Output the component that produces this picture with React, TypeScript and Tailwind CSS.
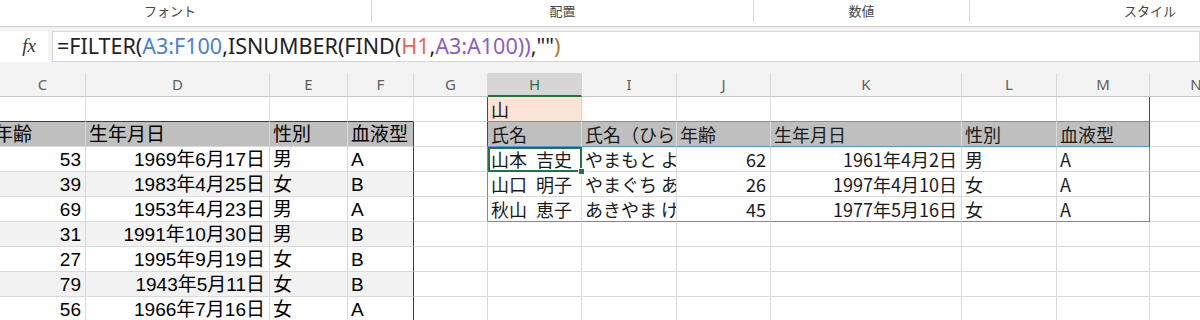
import type { ReactNode } from "react";

const GRID = "grid grid-cols-[86px_184px_78px_66px_74px_94px_95px_94px_191px_95px_93px_93px]";
const LEFT_FONT = "font-['Liberation_Sans','Noto_Sans_CJK_JP',sans-serif] text-[19px] text-black";
const RIGHT_FONT = "font-['Noto_Sans_CJK_JP',sans-serif] text-[18px] text-[#1a1a1a]";

const COLUMNS = ["C", "D", "E", "F", "G", "H", "I", "J", "K", "L", "M", "N"];

const LEFT_ROWS = [
  ["53", "1969年6月17日", "男", "A"],
  ["39", "1983年4月25日", "女", "B"],
  ["69", "1953年4月23日", "男", "A"],
  ["31", "1991年10月30日", "男", "B"],
  ["27", "1995年9月19日", "女", "B"],
  ["79", "1943年5月11日", "女", "B"],
  ["56", "1966年7月16日", "女", "A"],
];

const RIGHT_ROWS = [
  ["山本 吉史", "やまもと よしふみ", "62", "1961年4月2日", "男", "A"],
  ["山口 明子", "やまぐち あきこ", "26", "1997年4月10日", "女", "A"],
  ["秋山 恵子", "あきやま けいこ", "45", "1977年5月16日", "女", "A"],
];

const HEADERS_LEFT = ["年齢", "生年月日", "性別", "血液型"];
const HEADERS_RIGHT = ["氏名", "氏名（ひらがな）", "年齢", "生年月日", "性別", "血液型"];

const LINE = "border-r-[#dadada]";
const LINE_B = "border-b-[#dadada]";
const DARK_R = "border-r-[#3c3c3c]";
const DARK_B = "border-b-[#3c3c3c]";
const BLUE_R = "border-r-[#5b8fdc]";
const BLUE_B = "border-b-[#5b8fdc]";

interface CellProps {
  children?: ReactNode;
  right?: boolean;
  bg?: string;
  rc?: string;
  bc?: string;
  font?: string;
  selected?: boolean;
}

function Cell({ children, right, bg = "bg-white", rc = LINE, bc = LINE_B, font = "", selected }: CellProps) {
  return (
    <div
      className={`flex h-[25px] items-center whitespace-nowrap border-r border-b leading-none ${
        right ? "justify-end pr-[4px] pl-[3px]" : "px-[3px]"
      } ${selected ? "relative outline-2 -outline-offset-2 outline-[#217346]" : "overflow-hidden"} ${bg} ${rc} ${bc} ${font}`}
    >
      {children}
      {selected && (
        <span className="absolute -right-[4px] -bottom-[4px] z-10 h-[7px] w-[7px] border border-white bg-[#217346]" />
      )}
    </div>
  );
}

function SheetRow({ r }: { r: number }) {
  const left = r >= 3 ? LEFT_ROWS[r - 3] : null;
  const right = r >= 3 && r <= 5 ? RIGHT_ROWS[r - 3] : null;
  const stripe = r >= 3 && r % 2 === 0 ? "bg-[#f2f2f2]" : "bg-white";
  const cells: ReactNode[] = [];

  // left table, C..F
  for (let c = 0; c < 4; c++) {
    const rc = c === 3 && r >= 2 ? DARK_R : LINE;
    if (r === 1) {
      cells.push(<Cell key={c} bc={DARK_B} rc={rc} />);
    } else if (r === 2) {
      cells.push(
        <Cell key={c} bg="bg-[#bfbfbf]" rc={rc} font={LEFT_FONT}>
          {c === 0 ? <span className="-ml-[9px]">{HEADERS_LEFT[c]}</span> : HEADERS_LEFT[c]}
        </Cell>,
      );
    } else {
      cells.push(
        <Cell key={c} bg={stripe} rc={rc} right={c < 2} font={LEFT_FONT}>
          {left?.[c]}
        </Cell>,
      );
    }
  }

  // G
  cells.push(<Cell key="g" rc={r <= 2 ? "border-r-[#4a4a4a]" : r <= 5 ? BLUE_R : LINE} />);

  // right table, H..M
  for (let c = 0; c < 6; c++) {
    const rc = c === 5 ? (r <= 2 ? "border-r-[#4a4a4a]" : r <= 5 ? BLUE_R : LINE) : LINE;
    if (r === 1) {
      cells.push(
        <Cell key={`h${c}`} bg={c === 0 ? "bg-[#fce4d6]" : "bg-white"} rc={rc} bc="border-b-[#8c8c8c]" font={RIGHT_FONT}>
          {c === 0 ? "山" : null}
        </Cell>,
      );
    } else if (r === 2) {
      cells.push(
        <Cell key={`h${c}`} bg="bg-[#bfbfbf]" rc={rc} bc={BLUE_B} font={RIGHT_FONT}>
          {HEADERS_RIGHT[c]}
        </Cell>,
      );
    } else {
      cells.push(
        <Cell
          key={`h${c}`}
          rc={rc}
          bc={r === 5 ? BLUE_B : LINE_B}
          right={c === 2 || c === 3}
          font={RIGHT_FONT}
          selected={r === 3 && c === 0}
        >
          {c === 0 && right ? <span className="[word-spacing:5px]">{right[c]}</span> : right?.[c]}
        </Cell>,
      );
    }
  }

  // N
  cells.push(<Cell key="n" />);

  return <div className={GRID}>{cells}</div>;
}

function Ribbon() {
  return (
    <div className="flex h-[27px] border-b border-[#cdcdcd] bg-white font-['Noto_Sans_CJK_JP',sans-serif] text-[13px] text-[#474747]">
      <div className="flex h-[22px] w-[371px] items-center justify-center pr-[31px]">フォント</div>
      <div className="h-[22px] w-px bg-[#d4d4d4]" />
      <div className="flex h-[22px] w-[381px] items-center justify-center">配置</div>
      <div className="h-[22px] w-px bg-[#d4d4d4]" />
      <div className="flex h-[22px] w-[215px] items-center justify-center">数値</div>
      <div className="h-[22px] w-px bg-[#d4d4d4]" />
      <div className="flex h-[22px] flex-1 items-center justify-end pr-[24px]">スタイル</div>
    </div>
  );
}

function FormulaBar() {
  return (
    <div className="flex h-[36px] bg-[#f3f3f3] pt-[4px]">
      <div className="flex h-[31px] w-[48px] items-center justify-end bg-white pr-[12px] font-['Liberation_Serif',serif] text-[19px] italic text-[#333]">
        fx
      </div>
      <div className="ml-[4px] flex h-[31px] flex-1 items-center border border-[#d6d6d6] bg-white pl-[4px] font-['Noto_Sans',sans-serif] text-[21.5px] text-[#222]">
        <span>=FILTER(</span>
        <span className="text-[#4a7fd6]">A3:F100</span>
        <span>,ISNUMBER(FIND(</span>
        <span className="text-[#e5685a]">H1</span>
        <span>,</span>
        <span className="text-[#8c5cc9]">A3:A100</span>
        <span className="text-[#8c5cc9]">))</span>
        <span>,""</span>
        <span className="text-[#b8761f]">)</span>
      </div>
    </div>
  );
}

function ColumnHeaders() {
  return (
    <div className={`${GRID} font-['Noto_Sans',sans-serif] text-[15px]`}>
      {COLUMNS.map((col) =>
        col === "H" ? (
          <div
            key={col}
            className="flex h-[24px] items-center justify-center border-r border-b-2 border-r-[#d4d4d4] border-b-[#217346] bg-[#d6d6d6] text-[#217346]"
          >
            {col}
          </div>
        ) : (
          <div
            key={col}
            className="flex h-[24px] items-center justify-center border-r border-b border-r-[#dadada] border-b-[#c6c6c6] bg-[#f3f3f3] text-[#5f5f5f]"
          >
            {col}
          </div>
        ),
      )}
    </div>
  );
}

export default function App() {
  return (
    <div className="h-[320px] w-[1200px] overflow-hidden bg-white">
      <Ribbon />
      <FormulaBar />
      <div className="h-[10px] bg-[#f3f3f3]" />
      <ColumnHeaders />
      {[1, 2, 3, 4, 5, 6, 7, 8, 9].map((r) => (
        <SheetRow key={r} r={r} />
      ))}
    </div>
  );
}
